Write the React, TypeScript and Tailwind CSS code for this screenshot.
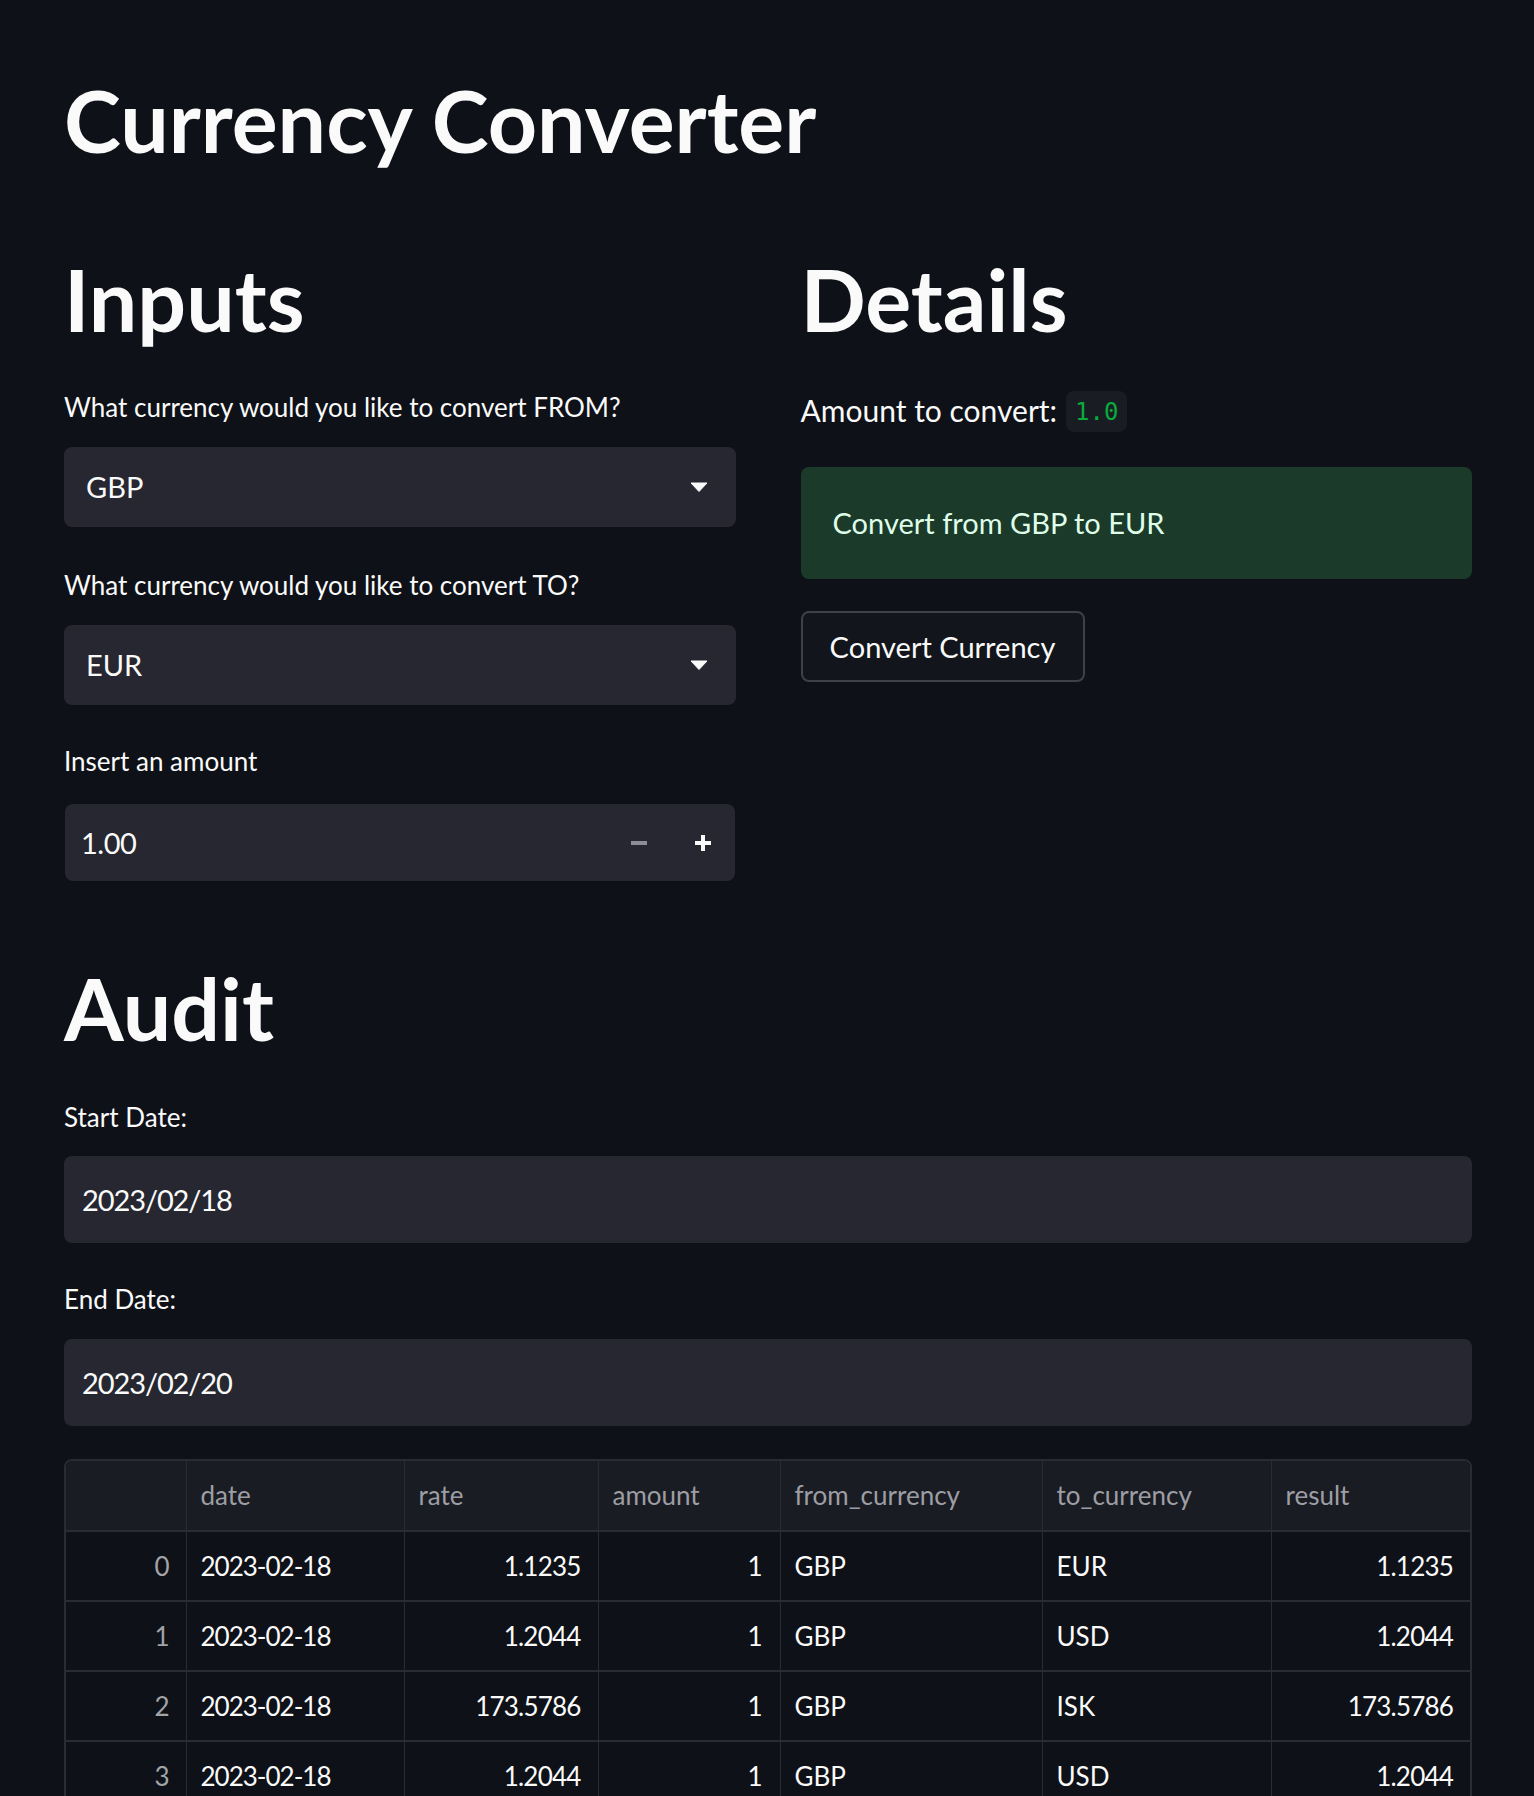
const rows = [
	{ i: 0, date: '2023-02-18', rate: '1.1235', amount: '1', from: 'GBP', to: 'EUR', result: '1.1235' },
	{ i: 1, date: '2023-02-18', rate: '1.2044', amount: '1', from: 'GBP', to: 'USD', result: '1.2044' },
	{ i: 2, date: '2023-02-18', rate: '173.5786', amount: '1', from: 'GBP', to: 'ISK', result: '173.5786' },
	{ i: 3, date: '2023-02-18', rate: '1.2044', amount: '1', from: 'GBP', to: 'USD', result: '1.2044' },
];

function Caret() {
	return (
		<svg width="18" height="10" viewBox="0 0 18 10">
			<path d="M1 1 L17 1 L9 9.5 Z" fill="#fafafa" stroke="#fafafa" strokeWidth="1" strokeLinejoin="round" />
		</svg>
	);
}

function Label({ children }: { children: React.ReactNode }) {
	return <div className="text-[26px] leading-[36px] text-[#fafafa]">{children}</div>;
}

function Select({ value }: { value: string }) {
	return (
		<div className="mt-[22px] h-[80px] rounded-lg bg-[#262730] flex items-center justify-between pl-[22px] pr-[28px]">
			<span className="text-[29px] text-[#fafafa]">{value}</span>
			<Caret />
		</div>
	);
}

function Heading({ children }: { children: React.ReactNode }) {
	return <h2 className="text-[86px] leading-[100px] font-bold text-[#fafafa]">{children}</h2>;
}

export default function App() {
	return (
		<div
			className="min-h-[1796px] bg-[#0e1117] pl-[64px] pr-[62px] pt-[70px] pb-10"
			style={{ fontFamily: 'Lato, "Noto Sans", sans-serif' }}
		>
			<h1 className="text-[86px] leading-[100px] font-bold text-[#fafafa]">Currency Converter</h1>

			<div className="mt-[79px] grid grid-cols-2 gap-[65px]">
				{/* inputs column */}
				<div>
					<Heading>Inputs</Heading>
					<div className="mt-[40px]">
						<Label>What currency would you like to convert FROM?</Label>
					</div>
					<Select value="GBP" />
					<div className="mt-[40px]">
						<Label>What currency would you like to convert TO?</Label>
					</div>
					<Select value="EUR" />
					<div className="mt-[38px]">
						<Label>Insert an amount</Label>
					</div>
					<div className="mt-[25px] mx-px h-[77px] rounded-lg bg-[#262730] flex items-center">
						<span className="flex-1 pl-[16px] text-[29px] tracking-[-0.5px] text-[#fafafa]">1.00</span>
						<div className="w-[64px] h-full flex items-center justify-center">
							<div className="w-[16px] h-[4px] bg-[#8b8d97]" />
						</div>
						<div className="w-[64px] h-full flex items-center justify-center relative">
							<div className="w-[16px] h-[4px] bg-[#fafafa]" />
							<div className="absolute w-[4px] h-[16px] bg-[#fafafa]" />
						</div>
					</div>
				</div>

				{/* details column */}
				<div>
					<Heading>Details</Heading>
					<div className="mt-[42px] h-[41px] flex items-center text-[30px] text-[#fafafa]">
						<span className="pb-[2px]">Amount to convert:</span>
						<code
							className="ml-[9px] h-[41px] px-[9px] rounded-lg bg-[#1a1c24] text-[#09ab3b] text-[24px] flex items-center"
							style={{ fontFamily: '"DejaVu Sans Mono", "Liberation Mono", monospace' }}
						>
							1.0
						</code>
					</div>
					<div className="mt-[35px] h-[112px] rounded-lg bg-[#1b3a2a] flex items-center pl-[32px] text-[29px] text-[#dffde9]">
						Convert from GBP to EUR
					</div>
					<button className="mt-[32px] w-[284px] h-[71px] rounded-lg border-2 border-[#3f4148] bg-[#12151c] text-[29px] text-[#fafafa] flex items-center justify-center">
						Convert Currency
					</button>
				</div>
			</div>

			<div className="mt-[77px]">
				<Heading>Audit</Heading>
			</div>
			<div className="mt-[41px]">
				<Label>Start Date:</Label>
			</div>
			<div className="mt-[21px] h-[87px] rounded-lg bg-[#262730] flex items-center pl-[18px] text-[29px] tracking-[-1.1px] text-[#fafafa]">
				2023/02/18
			</div>
			<div className="mt-[38px]">
				<Label>End Date:</Label>
			</div>
			<div className="mt-[22px] h-[87px] rounded-lg bg-[#262730] flex items-center pl-[18px] text-[29px] tracking-[-1.1px] text-[#fafafa]">
				2023/02/20
			</div>

			<div className="mt-[33px] rounded-t-lg border-2 border-[#2a2c33] overflow-hidden">
				<table className="w-full border-collapse table-fixed text-[26px]">
					<colgroup>
						<col className="w-[120px]" />
						<col className="w-[218px]" />
						<col className="w-[194px]" />
						<col className="w-[182px]" />
						<col className="w-[262px]" />
						<col className="w-[229px]" />
						<col />
					</colgroup>
					<thead>
						<tr className="h-[70px] bg-[#1a1c23] text-[#9d9ea3] border-b-2 border-[#2a2c33]">
							<th className="border-r border-[#2a2c33]" />
							<th className="border-r border-[#2a2c33] text-left font-normal pl-[14px]">date</th>
							<th className="border-r border-[#2a2c33] text-left font-normal pl-[14px]">rate</th>
							<th className="border-r border-[#2a2c33] text-left font-normal pl-[14px]">amount</th>
							<th className="border-r border-[#2a2c33] text-left font-normal pl-[14px]">from_currency</th>
							<th className="border-r border-[#2a2c33] text-left font-normal pl-[14px]">to_currency</th>
							<th className="text-left font-normal pl-[14px]">result</th>
						</tr>
					</thead>
					<tbody>
						{rows.map((r) => (
							<tr key={r.i} className="h-[70px] text-[#fafafa] border-b-2 border-[#2a2c33]">
								<td className="border-r border-[#2a2c33] text-right pr-[16px] text-[#a3a4a8]">{r.i}</td>
								<td className="border-r border-[#2a2c33] pl-[14px] tracking-[-1px]">{r.date}</td>
								<td className="border-r border-[#2a2c33] text-right pr-[17px] tracking-[-0.8px]">{r.rate}</td>
								<td className="border-r border-[#2a2c33] text-right pr-[17px]">{r.amount}</td>
								<td className="border-r border-[#2a2c33] pl-[14px]">{r.from}</td>
								<td className="border-r border-[#2a2c33] pl-[14px]">{r.to}</td>
								<td className="text-right pr-[17px] tracking-[-0.8px]">{r.result}</td>
							</tr>
						))}
					</tbody>
				</table>
			</div>
		</div>
	);
}
